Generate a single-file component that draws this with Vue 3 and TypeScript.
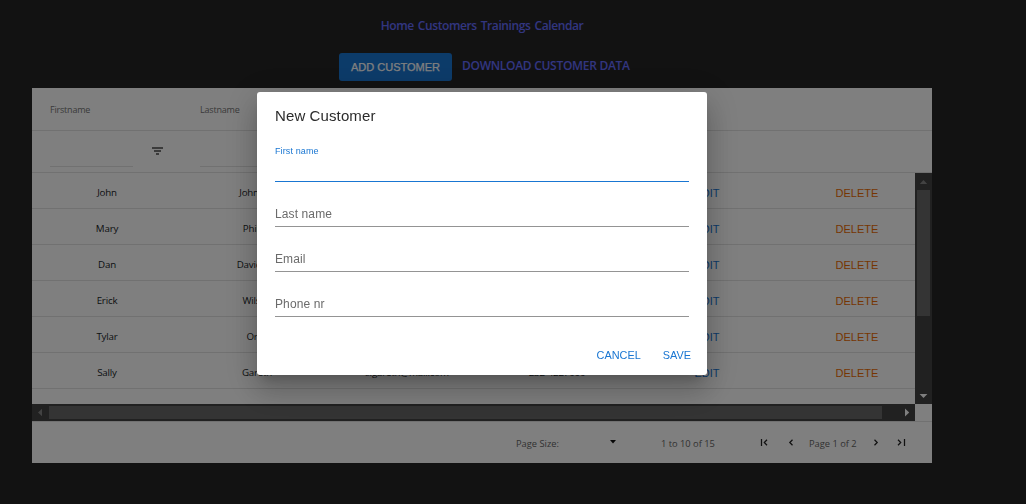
<script setup lang="ts">
interface Customer { first: string; last: string; email: string; phone: string }

const links: string[] = ['Home', 'Customers', 'Trainings', 'Calendar']
const customers: Customer[] = [
  { first: 'John', last: 'Johnson', email: 'john@mail.com', phone: '232-3445540' },
  { first: 'Mary', last: 'Philips', email: 'mary.p@mail.com', phone: '232-310122' },
  { first: 'Dan', last: 'Davidson', email: 'd.david@mail.com', phone: '301-1111111' },
  { first: 'Erick', last: 'Wilson', email: 'erick@mail.com', phone: '301-2322222' },
  { first: 'Tylar', last: 'Ortis', email: 'tylar@mail.com', phone: '202-5012250' },
  { first: 'Sally', last: 'Gareth', email: 's.gareth@mail.com', phone: '232-4227000' },
]
const fields: string[] = ['Last name', 'Email', 'Phone nr']
</script>

<template>
  <div class="page">
    <nav class="nav"><a v-for="l in links" :key="l">{{ l }}</a></nav>
    <div class="toolbar">
      <button class="add"><span>ADD CUSTOMER</span></button>
      <a class="download">DOWNLOAD CUSTOMER DATA</a>
    </div>
    <section class="grid">
      <div class="head">
        <span>Firstname</span><span>Lastname</span>
      </div>
      <div class="filters">
        <div v-for="n in 2" :key="n" class="filter">
          <i class="line"></i>
          <svg width="11" height="8" viewBox="0 0 11 8" shape-rendering="crispEdges"><path d="M0 0h11v2H0zM2 3h7v2H2zM4 6h3v2H4z" fill="#777" /></svg>
        </div>
      </div>
      <div class="viewport">
        <div class="rows">
          <div v-for="c in customers" :key="c.first" class="row">
            <span>{{ c.first }}</span><span>{{ c.last }}</span><span>{{ c.email }}</span><span>{{ c.phone }}</span>
            <span class="action edit">EDIT</span><span class="action delete">DELETE</span>
          </div>
        </div>
        <div class="vbar">
          <svg class="arrow" width="17" height="17"><path d="M8.5 7l3.7 4H4.8z" fill="#858585" /></svg>
          <i class="vthumb"></i>
          <svg class="arrow end" width="17" height="17"><path d="M8.5 11L12.4 7H4.6z" fill="#fff" /></svg>
        </div>
      </div>
      <div class="hbar">
        <svg width="17" height="17"><path d="M6 8.5L10 4.8v7.4z" fill="#858585" /></svg>
        <i class="hthumb"></i>
        <svg class="end" width="17" height="17"><path d="M11.2 8.5L7 4.6v7.8z" fill="#fff" /></svg>
      </div>
      <footer class="pager">
        <span class="size">Page Size:</span>
        <svg class="caret" width="6" height="4"><path d="M0 0h6L3 3.4z" fill="#111" /></svg>
        <span class="range">1 to 10 of 15</span>
        <svg class="first" width="9" height="9" viewBox="0 0 9 9"><path d="M1.5 1v7M7 1.8L4.3 4.5 7 7.2" /></svg>
        <svg class="prev" width="6" height="9" viewBox="0 0 6 9"><path d="M4.5 1.8L1.8 4.5l2.7 2.7" /></svg>
        <span class="current">Page 1 of 2</span>
        <svg class="next" width="6" height="9" viewBox="0 0 6 9"><path d="M1.5 1.8l2.7 2.7-2.7 2.7" /></svg>
        <svg class="last" width="9" height="9" viewBox="0 0 9 9"><path d="M1 1.8l2.7 2.7L1 7.2M7.5 1v7" /></svg>
      </footer>
    </section>
  </div>
  <div class="overlay">
    <div class="dialog" role="dialog">
      <h2>New Customer</h2>
      <div class="field focused"><label>First name</label></div>
      <div v-for="f in fields" :key="f" class="field"><label>{{ f }}</label></div>
      <div class="actions"><button>CANCEL</button><button>SAVE</button></div>
    </div>
  </div>
</template>

<style>
html, body { margin: 0; background: #242424; overflow: hidden; }
</style>

<style scoped>
* { box-sizing: border-box; }
button { border: 0; padding: 0; background: none; font-family: "Liberation Sans", Arial, sans-serif; }
.page { width: 964px; height: 504px; padding: 0 32px; font-family: "Open Sans", "Noto Sans", sans-serif; }
.nav { height: 53px; padding-top: 18px; display: flex; justify-content: center; gap: 4px; font: 600 12px/16px "Open Sans", sans-serif; letter-spacing: -.4px; color: #646cff; }
.toolbar { height: 35px; display: flex; padding-left: 307px; }
.add { width: 113px; height: 28px; border-radius: 3px; background: #1976d2; color: #fff; font-size: 11px; -webkit-text-stroke: .25px #fff; white-space: nowrap; }
.download { margin-left: 10px; font: 600 12px/25px "Open Sans", sans-serif; letter-spacing: -.29px; color: #646cff; white-space: nowrap; }
.grid { width: 900px; height: 375px; background: #fff; font-size: 9px; color: #181d1f; }
.head { height: 43px; border-bottom: 1px solid #e2e2e2; display: flex; padding-left: 18px; color: #757575; line-height: 43px; letter-spacing: -.2px; }
.head span { width: 150px; }
.filters { height: 42px; border-bottom: 1px solid #e2e2e2; display: flex; }
.filter { width: 150px; padding-left: 18px; display: flex; }
.line { width: 83px; height: 36px; border-bottom: 1px solid #e2e2e2; }
.filter svg { margin: 16px 0 0 19px; }
.viewport { height: 231px; display: flex; }
.rows { width: 883px; overflow: hidden; }
.row { width: 900px; height: 36px; border-bottom: 1px solid #e2e2e2; display: grid; grid-template-columns: repeat(6, 150px); text-align: center; line-height: 39px; font-size: 9.75px; letter-spacing: -.2px; }
.action { font-family: "Liberation Sans", Arial, sans-serif; font-size: 11px; letter-spacing: 0; line-height: 40px; }
.edit { color: #1976d2; }
.delete { color: #ed6c02; }
.vbar { width: 17px; background: #424242; display: flex; flex-direction: column; align-items: center; }
.vthumb { width: 13px; height: 126px; background: #686868; }
.vbar .end { margin-top: auto; }
.hbar { width: 883px; height: 17px; background: #424242; display: flex; align-items: center; }
.hthumb { width: 833px; height: 13px; background: #686868; }
.hbar .end { margin-left: auto; }
.pager { height: 42px; border-top: 1px solid #e2e2e2; display: flex; align-items: center; font-size: 9.3px; color: #656565; white-space: nowrap; padding: 2px 0 0 484px; }
.pager svg path { stroke-width: 1.25; }
.pager svg:not(.caret) path { fill: none; stroke: #222; }
.pager svg { flex: none; margin-bottom: 3px; }
.size { width: 94px; }
.range { margin-left: 45px; width: 99px; }
.prev { margin-left: 19px; }
.current { margin-left: 15px; width: 64px; }
.last { margin-left: 18px; }
.overlay { position: fixed; inset: 0; background: rgba(0, 0, 0, .5); }
.dialog { width: 450px; height: 283px; margin: 92px 0 0 257px; border-radius: 3px; background: #fff; padding: 0 18px; font-family: "Liberation Sans", Arial, sans-serif; box-shadow: 0 8px 11px -5px rgba(0,0,0,.2), 0 18px 28px 2px rgba(0,0,0,.14), 0 7px 34px 6px rgba(0,0,0,.12); }
h2 { margin: 0; height: 48px; font: 400 15px/48px "Liberation Sans", Arial, sans-serif; letter-spacing: .11px; color: #2b2b2b; }
.field { height: 45px; border-bottom: 1px solid #949494; color: #6b6b6b; font-size: 12px; letter-spacing: .11px; padding-top: 24px; line-height: 16px; }
.field.focused { height: 42px; border-color: #1976d2; color: #1976d2; font-size: 9px; padding-top: 3px; }
.actions { display: flex; justify-content: flex-end; margin-right: -2px; padding-top: 29px; gap: 22px; }
.actions button { color: #1976d2; font-size: 10.9px; line-height: 18px; }
</style>
